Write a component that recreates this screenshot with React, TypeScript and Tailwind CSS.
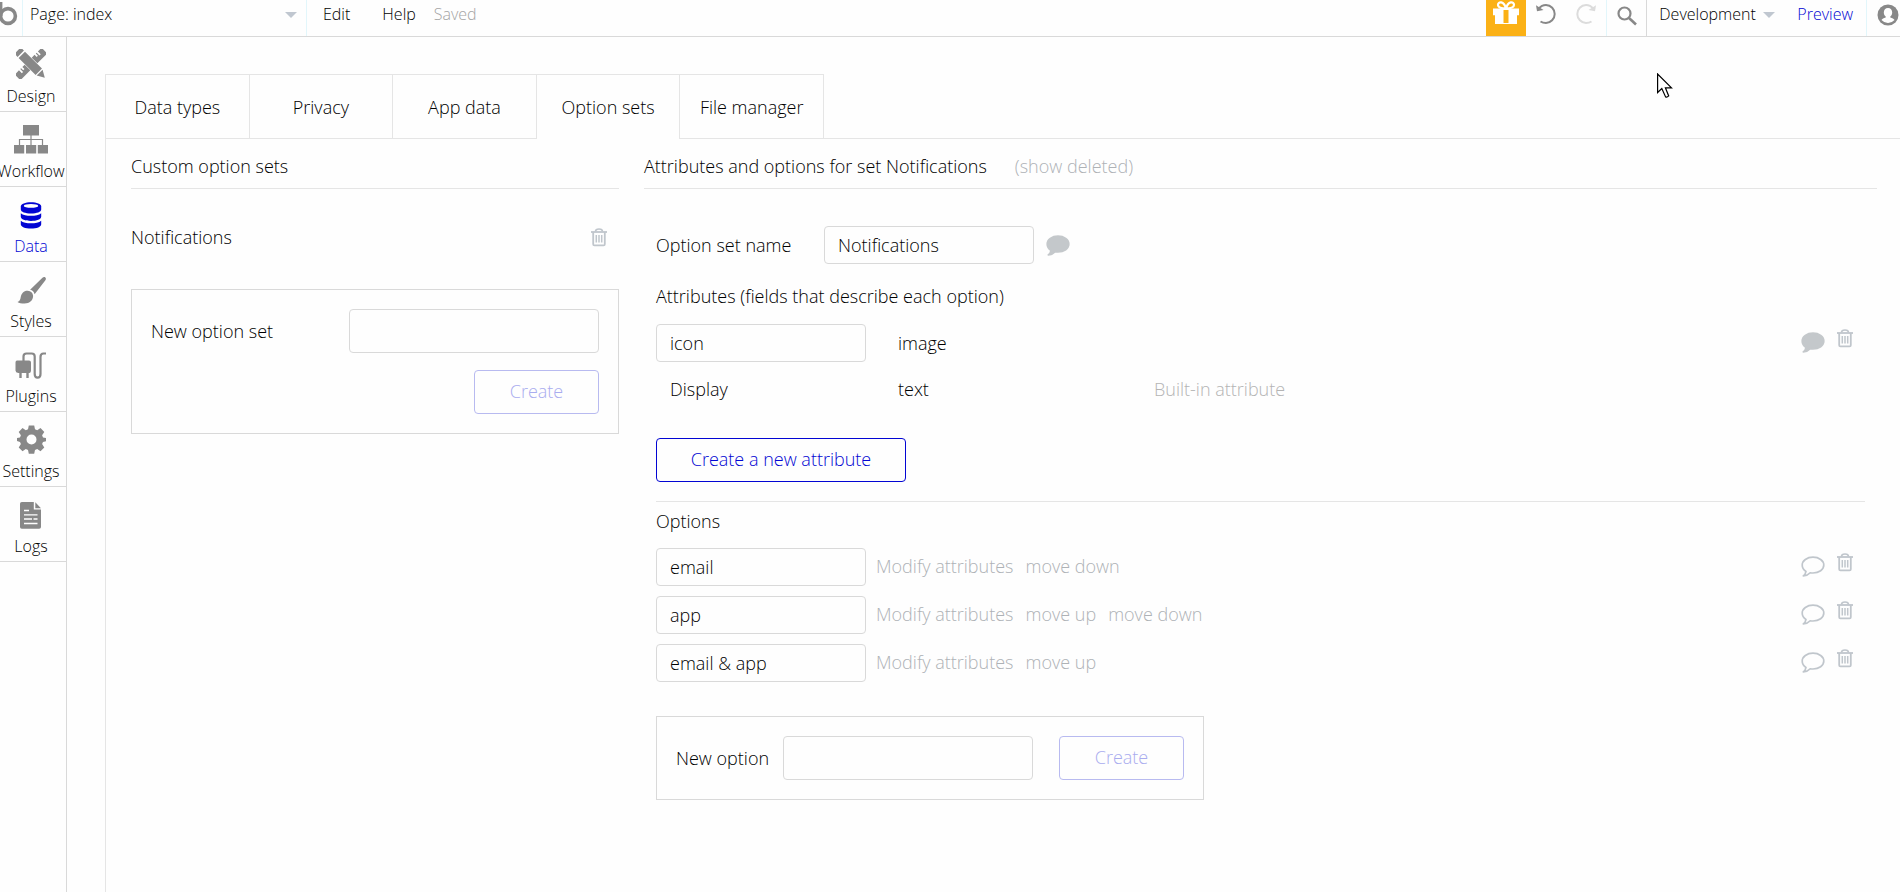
import { type ReactNode } from 'react';
import clsx from 'clsx';

const inputClass =
    'rounded border border-[#d9d9d9] bg-transparent px-[13px] text-black outline-none focus:border-[#0205d3]';
const mutedButtonClass = 'text-[#aeb2b6] hover:text-[#888]';

/* ---------- Icons ---------- */

function TrashIcon() {
    return (
        <svg width="16" height="19" viewBox="0 0 16 19" fill="none" stroke="#c0c6cc">
            <path d="M0 4h16" strokeWidth="1.8" />
            <path d="M4.5 3.6C4.5 1.6 5.5 1 8 1s3.5.6 3.5 2.6" strokeWidth="1.6" />
            <path d="M2.2 4v12.2q0 1.2 1.2 1.2h9.2q1.2 0 1.2-1.2V4" strokeWidth="1.8" />
            <path d="M5.3 7v7.5M8 7v7.5M10.7 7v7.5" strokeWidth="1.5" />
        </svg>
    );
}

function CommentIcon({ filled = false }: { filled?: boolean }) {
    return (
        <svg
            width="24"
            height="21"
            viewBox="0 0 24 21"
            fill={filled ? '#c4c8cb' : 'none'}
            stroke={filled ? '#c4c8cb' : '#c0c6cc'}
            strokeWidth="1.7"
            strokeLinejoin="round"
        >
            <path d="M12 1.2c6 0 10.8 3.4 10.8 7.9S18 17 12 17c-1 0-1.9-.1-2.8-.2-1.6 1.8-3.7 2.9-6.9 3.2 1.7-1.3 2.400-2.600 2.700-4.600C2.700 14 1.200 11.700 1.200 9.100 1.200 4.600 6 1.200 12 1.200z" />
        </svg>
    );
}

function CaretDown() {
    return (
        <svg width="12" height="6" viewBox="0 0 12 6" fill="#c0c7d0">
            <path d="M0 0h12L6 6z" />
        </svg>
    );
}

function LogoIcon() {
    return (
        <svg width="18" height="26" viewBox="0 0 18 26" fill="none" stroke="#888" strokeWidth="3.6">
            <circle cx="8" cy="16" r="7.4" />
            <path d="M.8 2v14" strokeWidth="3.2" />
        </svg>
    );
}

function GiftIcon() {
    return (
        <svg width="28" height="25" viewBox="0 0 28 25">
            <g fill="none" stroke="#fff" strokeWidth="2.2">
                <path d="M14 8.5C10 8.5 6 7.5 6 4.800 6 1.200 12 .8 14 8.500z" />
                <path d="M14 8.500c4 0 8-1 8-3.700 0-3.600-6-4-8 3.700z" />
            </g>
            <path fill="#fff" d="M1 8.500h26v6.800h-2V24H3v-8.700H1z" />
            <path fill="#fbb116" d="M11.500 10h5v13h-5z" />
        </svg>
    );
}

function UndoIcon({ className }: { className?: string }) {
    return (
        <svg width="20" height="22" viewBox="0 0 20 22" fill="none" stroke="currentColor" className={className}>
            <path d="M3 5.500C4.800 3 7.200 2 10 2c5 .1 8.700 4.200 8.700 9s-4 9-8.700 9c-2 0-3.900-.5-5.500-1.500" strokeWidth="2" />
            <path d="M0 2.200l1 6L7.500 7z" fill="currentColor" stroke="none" />
        </svg>
    );
}

function SearchIcon() {
    return (
        <svg width="20" height="20" viewBox="0 0 20 20" fill="none" stroke="#888">
            <circle cx="7.500" cy="7.500" r="6" strokeWidth="2.200" />
            <path d="M12 12l7 6.500" strokeWidth="2.600" />
        </svg>
    );
}

function UserIcon() {
    return (
        <svg width="22" height="22" viewBox="0 0 22 22">
            <circle cx="11" cy="11" r="10.500" fill="#888" />
            <path
                fill="#fff"
                d="M11 4c2.600 0 4.200 1.900 4.200 4.400 0 1.800-.8 3.200-1.900 4v1.200c2 .6 3.600 1.300 4.200 2.500A8.500 8.500 0 0 1 11 19a8.500 8.500 0 0 1-6.500-2.900c.6-1.200 2.200-1.900 4.200-2.500v-1.200c-1.100-.8-1.900-2.200-1.900-4C6.800 5.900 8.400 4 11 4z"
            />
        </svg>
    );
}

function DesignIcon() {
    return (
        <svg width="30" height="30" viewBox="0 0 30 30" fill="currentColor">
            <g transform="rotate(-45 15 15)">
                {/* ruler */}
                <path d="M-2 11H2v4h1.800v-4H5v3h1.800v-3H10v8H-2.800q-1.200 0-1.200-1.200v-5.600Q-4 11-2.800 11z" />
                <path d="M20 11h4v3h1.800v-3H27v4h1.800v-4h4q1.200 0 1.200 1.200v5.600q0 1.200-1.200 1.200H20z" />
                {/* pencil */}
                <path d="M10.500-2q0-2 2-2h5q2 0 2 2V.5h-9zM10.500 2h9v24h-9zM10.800 27.200h8.400L15 34.500z" />
            </g>
        </svg>
    );
}

function WorkflowIcon() {
    return (
        <svg width="34" height="29" viewBox="0 0 34 29" fill="currentColor">
            <path d="M9 0h16v10.500H9zM0 20h10.200v8.500H0zM12 20h10.200v8.500H12zM23.800 20H34v8.500H23.800z" />
            <path d="M17 10v10M5.500 20v-5.500h23V20" fill="none" stroke="currentColor" strokeWidth="1.200" />
        </svg>
    );
}

function DataIcon() {
    return (
        <svg width="22" height="27" viewBox="0 0 22 27">
            <path
                fill="currentColor"
                d="M.8 4.500C.8 2 5.300.3 11 .3S21.200 2 21.200 4.500v3c0 2.400-4.500 4-10.200 4S.8 9.900.8 7.500z"
            />
            <ellipse cx="11" cy="3.900" rx="7.200" ry="1.900" fill="#fefefe" />
            <path
                fill="currentColor"
                d="M.8 11.200c2 1.800 6 2.600 10.200 2.600s8.200-.8 10.200-2.600v3.500c0 2.400-4.500 4.200-10.200 4.200S.8 17.100.8 14.700zM.8 18.700c2 1.800 6 2.600 10.200 2.600s8.200-.8 10.200-2.600v3.500c0 2.600-4.500 4.400-10.200 4.400S.8 24.800.8 22.200z"
            />
        </svg>
    );
}

function StylesIcon() {
    return (
        <svg width="29" height="27" viewBox="0 0 29 27" fill="currentColor">
            <path d="M28.300.5c1 .9.600 2-.1 3L17.600 17.200c-.7-2.500-2-3.800-4.500-4.400L25.200 1c1-.9 2.200-1.300 3.100-.5z" />
            <path d="M10.800 13.800c3.100.3 5 2.200 5.300 5 .2 4.500-3.500 7.700-8.600 7.700-3 0-5.500-.5-7-1.600 2.300-.7 2.700-2.300 3.200-4.700.8-4 3.400-6.700 7.100-6.400z" />
        </svg>
    );
}

function PluginsIcon() {
    return (
        <svg width="32" height="27" viewBox="0 0 32 27">
            <path
                fill="currentColor"
                d="M2 8.500h12q2 0 2 2v8q0 2-1.500 2.500h-.8v5h-2.400v-5H6.700v5H4.300v-5h-1Q.5 20.500.5 18.500v-8q0-2 1.500-2z"
            />
            <path
                d="M8.500 9V4.500q0-3 3-3h5.200q3 0 3 3V22q0 3.600 2.900 3.600T25.500 22V5q0-3.500 3-3.500H31"
                fill="none"
                stroke="currentColor"
                strokeWidth="2.200"
            />
        </svg>
    );
}

function SettingsIcon() {
    return (
        <svg width="29" height="29" viewBox="-14.500 -14.500 29 29" fill="currentColor">
            <path
                fillRule="evenodd"
                d="M-2.700-14h5.400l.8 3.800 2.200 1 3.300-2.200 3.800 3.800-2.200 3.300.9 2.200 3.800.7v3l-3.800.9-.9 2.100 2.200 3.400-3.800 3.800-3.300-2.200-2.200 1-.8 3.700h-5.400l-.8-3.700-2.200-1L-9 11.800-12.800 8l2.200-3.400-.9-2.100-3-.9v-3l3-.7.9-2.200L-12.800-7.600-9-11.400l3.300 2.200 2.200-1zM0-5a5 5 0 1 0 0 10A5 5 0 0 0 0-5z"
            />
        </svg>
    );
}

function LogsIcon() {
    return (
        <svg width="22" height="27" viewBox="0 0 22 27">
            <path fill="currentColor" d="M1.800 0h12v7.500H21V25q0 1.800-1.800 1.800H1.800Q0 26.800 0 25V1.800Q0 0 1.800 0zM15.300.2L21 6.200h-5.700z" />
            <path d="M4 8.500h5M4 12.800h13.500M4 17h8M13.500 17h4M4 21.500h13.500" stroke="#fefefe" strokeWidth="1.300" />
        </svg>
    );
}

/* ---------- Layout parts ---------- */

const navItems: { label: string; icon: ReactNode }[] = [
    { label: 'Design', icon: <DesignIcon /> },
    { label: 'Workflow', icon: <WorkflowIcon /> },
    { label: 'Data', icon: <DataIcon /> },
    { label: 'Styles', icon: <StylesIcon /> },
    { label: 'Plugins', icon: <PluginsIcon /> },
    { label: 'Settings', icon: <SettingsIcon /> },
    { label: 'Logs', icon: <LogsIcon /> },
];

const tabs = ['Data types', 'Privacy', 'App data', 'Option sets', 'File manager'];

const options = [
    { name: 'email', actions: ['Modify attributes', 'move down'] },
    { name: 'app', actions: ['Modify attributes', 'move up', 'move down'] },
    { name: 'email & app', actions: ['Modify attributes', 'move up'] },
];

function TopBar() {
    return (
        <header className="flex h-[37px] shrink-0 items-stretch border-b border-[#d9d9d9] text-base leading-6">
            <div className="flex w-[22px] items-start">
                <LogoIcon />
            </div>
            <div className="relative w-[285px] border-x border-[#e2f6fb]">
                <select aria-label="Page" className="h-7 w-full appearance-none bg-transparent pl-[7px] outline-none">
                    <option>Page: index</option>
                </select>
                <span className="pointer-events-none absolute top-3 right-[9px]">
                    <CaretDown />
                </span>
            </div>
            <nav className="flex h-7 items-center pl-4">
                <button type="button">Edit</button>
                <button type="button" className="ml-8">Help</button>
                <span className="ml-[18px] text-[#a4a4a4]">Saved</span>
            </nav>

            <div className="ml-auto flex">
                <button type="button" aria-label="Gifts" className="flex w-10 items-start justify-center bg-[#fbb116]">
                    <GiftIcon />
                </button>
                <button type="button" aria-label="Undo" className="flex h-7 w-10 items-center justify-center text-[#888]">
                    <UndoIcon />
                </button>
                <button type="button" aria-label="Redo" className="flex h-7 w-10 items-center justify-center text-[#dcdcdc]">
                    <UndoIcon className="-scale-x-100" />
                </button>
                <button
                    type="button"
                    aria-label="Search"
                    className="flex w-10 items-center justify-center border-l border-[#e2f6fb] pb-1"
                >
                    <SearchIcon />
                </button>
                <div className="relative w-[138px] border-l border-[#d9d9d9]">
                    <select aria-label="Version" className="h-7 w-full appearance-none bg-transparent pl-3 outline-none">
                        <option>Development</option>
                    </select>
                    <span className="pointer-events-none absolute top-3 right-[9px]">
                        <CaretDown />
                    </span>
                </div>
                <a href="#preview" className="flex h-7 items-center px-[13px] text-[#0205d3]">
                    Preview
                </a>
                <button type="button" aria-label="Account" className="flex items-start border-l border-[#e2f6fb] pt-1 pr-px pl-[10px]">
                    <UserIcon />
                </button>
            </div>
        </header>
    );
}

function Sidebar() {
    return (
        <nav className="w-[67px] shrink-0 border-r border-[#d9d9d9]">
            {navItems.map(({ label, icon }) => (
                <a
                    key={label}
                    href={`#${label.toLowerCase()}`}
                    className={clsx(
                        'flex h-[75px] flex-col items-center border-b border-[#d9d9d9] pr-1',
                        label === 'Data' ? 'text-[#0205d3]' : 'text-[#888]',
                    )}
                >
                    <span className="flex h-[47px] items-end pb-[5px]">
                        {icon}
                    </span>
                    <span className={clsx('text-base leading-6', label !== 'Data' && 'text-black')}>{label}</span>
                </a>
            ))}
        </nav>
    );
}

function Tabs() {
    return (
        <div className="flex h-[65px]">
            <div role="tablist" className="flex w-[719px] border-t border-r border-[#e5e5e5]">
                {tabs.map((tab) => (
                    <button
                        key={tab}
                        type="button"
                        role="tab"
                        aria-selected={tab === 'Option sets'}
                        className={clsx(
                            'flex-1 border-l border-[#e5e5e5]',
                            tab !== 'Option sets' && 'border-b',
                        )}
                    >
                        {tab}
                    </button>
                ))}
            </div>
            <div className="flex-1 border-b border-[#e5e5e5]" />
        </div>
    );
}

function RowActions({ filled }: { filled?: boolean }) {
    return (
        <div className="ml-auto flex items-start gap-3 pr-3 pb-[5px]">
            <button type="button" aria-label="Comment" className="mt-[3px]">
                <CommentIcon filled={filled} />
            </button>
            <button type="button" aria-label="Delete">
                <TrashIcon />
            </button>
        </div>
    );
}

function CustomSets() {
    return (
        <section className="w-[488px] shrink-0">
            <h2 className="h-[50px] border-b border-[#e5e5e5] pt-[15px] leading-6">Custom option sets</h2>
            <div className="flex items-center justify-between pt-9 pr-3 leading-6">
                <a href="#notifications">Notifications</a>
                <button type="button" aria-label="Delete Notifications">
                    <TrashIcon />
                </button>
            </div>
            <form className="mt-10 flex flex-col items-end gap-[17px] border border-[#d9d9d9] p-[19px]">
                <div className="flex w-full items-center justify-between">
                    <label htmlFor="new-set">New option set</label>
                    <input id="new-set" className={clsx(inputClass, 'h-11 w-[250px]')} />
                </div>
                <button type="button" className="h-11 w-[125px] rounded border border-[#b8baf0] pb-0.5 text-[#a9acef]">
                    Create
                </button>
            </form>
        </section>
    );
}

function SetDetails() {
    return (
        <section className="min-w-0 flex-1">
            <div className="flex h-[50px] gap-7 border-b border-[#e5e5e5] pt-[15px]">
                <h2 className="leading-6">Attributes and options for set Notifications</h2>
                <button type="button" className={clsx(mutedButtonClass, 'self-start leading-6')}>
                    (show deleted)
                </button>
            </div>

            <div className="px-3">
                <div className="flex items-center pt-[37px]">
                    <label htmlFor="set-name" className="w-[168px]">Option set name</label>
                    <input id="set-name" defaultValue="Notifications" className={clsx(inputClass, 'h-[38px] w-[210px]')} />
                    <button type="button" aria-label="Comment" className="ml-3">
                        <CommentIcon filled />
                    </button>
                </div>

                <h3 className="pt-5 leading-6">Attributes (fields that describe each option)</h3>
                <div className="mt-4 flex items-center">
                    <input aria-label="Attribute name" defaultValue="icon" className={clsx(inputClass, 'h-[38px] w-[210px]')} />
                    <span className="ml-8">image</span>
                    <RowActions filled />
                </div>
                <div className="mt-[15px] flex items-center leading-6">
                    <span className="w-[242px] pl-[14px]">Display</span>
                    <span className="w-64">text</span>
                    <span className="text-[#b4b4b4]">Built-in attribute</span>
                </div>
                <button
                    type="button"
                    className="mt-[37px] h-11 w-[250px] rounded border border-[#0205d3] pb-0.5 text-[#0205d3]"
                >
                    Create a new attribute
                </button>

                <hr className="mt-[19px] border-[#e5e5e5]" />

                <h3 className="pt-[7px] leading-6">Options</h3>
                <ul className="mt-[15px] flex flex-col gap-[10px]">
                    {options.map((option) => (
                        <li key={option.name} className="flex items-center">
                            <input
                                aria-label="Option name"
                                defaultValue={option.name}
                                className={clsx(inputClass, 'h-[38px] w-[210px]')}
                            />
                            <div className="ml-[10px] flex gap-3 pb-0.5">
                                {option.actions.map((action) => (
                                    <button key={action} type="button" className={mutedButtonClass}>
                                        {action}
                                    </button>
                                ))}
                            </div>
                            <RowActions />
                        </li>
                    ))}
                </ul>

                <form className="mt-[34px] flex w-[548px] items-center border border-[#d9d9d9] p-[19px]">
                    <label htmlFor="new-option">New option</label>
                    <input id="new-option" className={clsx(inputClass, 'ml-auto h-11 w-[250px]')} />
                    <button type="button" className="ml-[26px] h-11 w-[125px] rounded border border-[#b8baf0] pb-0.5 text-[#a9acef]">
                        Create
                    </button>
                </form>
            </div>
        </section>
    );
}

export default function App() {
    return (
        <div className="relative flex min-h-screen flex-col overflow-hidden bg-[#fefefe] font-['Open_Sans',sans-serif] text-lg font-light text-black">
            <TopBar />
            <div className="flex flex-1">
                <Sidebar />
                <main className="flex min-w-0 flex-1 flex-col pt-[37px] pl-[38px]">
                    <Tabs />
                    <div className="flex flex-1 gap-[25px] border-l border-[#e5e5e5] pr-[23px] pl-[25px]">
                        <CustomSets />
                        <SetDetails />
                    </div>
                </main>
            </div>

            {/* Mouse pointer */}
            <svg
                width="16"
                height="26"
                viewBox="0 0 16 26"
                className="pointer-events-none absolute top-[73px] left-[1657px]"
                fill="#fff"
                stroke="#000"
                strokeWidth="1.200"
            >
                <path d="M.6 1v18.500l4.200-3.900 3.700 8.100q1.300 1.200 3.200-.8L8.400 14.800H14.500z" />
            </svg>
        </div>
    );
}
